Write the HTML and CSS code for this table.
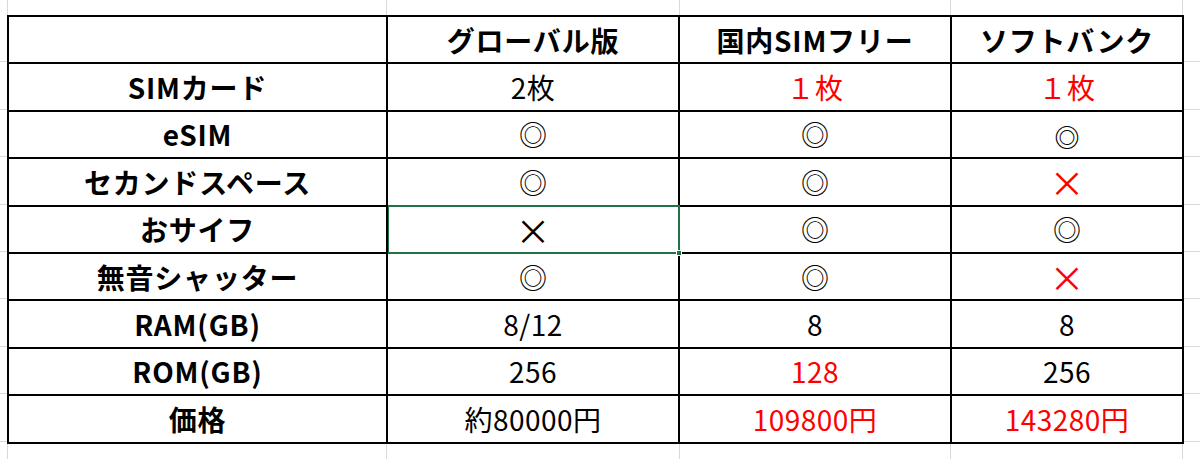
FILE: index.html
```html
<!DOCTYPE html>
<html lang="ja">
<head>
<meta charset="utf-8">
<title>比較表</title>
<link rel="stylesheet" href="styles.css">
</head>
<body>
<div class="sheet">
  <div class="table">
    <div class="cell head"></div>
    <div class="cell head">グローバル版</div>
    <div class="cell head">国内SIMフリー</div>
    <div class="cell head">ソフトバンク</div>

    <div class="cell head">SIMカード</div>
    <div class="cell">2枚</div>
    <div class="cell red">１枚</div>
    <div class="cell red">１枚</div>

    <div class="cell head">eSIM</div>
    <div class="cell mark">◎</div>
    <div class="cell mark">◎</div>
    <div class="cell mark alt">◎</div>

    <div class="cell head">セカンドスペース</div>
    <div class="cell mark">◎</div>
    <div class="cell mark">◎</div>
    <div class="cell mark cross red">×</div>

    <div class="cell head">おサイフ</div>
    <div class="cell mark cross selected">×<span class="sel-frame"><span class="sel-handle"></span></span></div>
    <div class="cell mark">◎</div>
    <div class="cell mark">◎</div>

    <div class="cell head">無音シャッター</div>
    <div class="cell mark">◎</div>
    <div class="cell mark">◎</div>
    <div class="cell mark cross red">×</div>

    <div class="cell head">RAM(GB)</div>
    <div class="cell">8/12</div>
    <div class="cell">8</div>
    <div class="cell">8</div>

    <div class="cell head">ROM(GB)</div>
    <div class="cell">256</div>
    <div class="cell red">128</div>
    <div class="cell">256</div>

    <div class="cell head">価格</div>
    <div class="cell">約80000円</div>
    <div class="cell red">109800円</div>
    <div class="cell red">143280円</div>
  </div>
</div>
</body>
</html>
```

FILE: styles.css
```css
* { box-sizing: border-box; }

html, body {
  margin: 0;
  padding: 0;
  background: #fff;
}

.sheet {
  width: 1200px;
  height: 459px;
  overflow: hidden;
  padding: 15px 0 0 7px;
  background-color: #fff;
  background-image:
    repeating-linear-gradient(to bottom, transparent 0 46.4px, #dadada 46.4px 47.4px),
    linear-gradient(to right,
      transparent 0 7px, #dadada 7px 8px,
      transparent 8px 386px, #dadada 386px 387px,
      transparent 387px 679px, #dadada 679px 680px,
      transparent 680px 950px, #dadada 950px 951px,
      transparent 951px 1182px, #dadada 1182px 1183px,
      transparent 1183px);
  background-position: 0 15px, 0 0;
  font-family: "Noto Sans CJK JP", "Noto Sans", sans-serif;
  color: #000;
}

.table {
  display: grid;
  width: max-content;
  grid-template-columns: 377px 290px 270px 230px;
  grid-auto-rows: 45.4px;
  gap: 2px;
  padding: 2px;
  background: #000;
}

.cell {
  position: relative;
  background: #fff;
  display: flex;
  align-items: center;
  justify-content: center;
  font-size: 28px;
  line-height: 1;
  font-weight: 400;
  white-space: nowrap;
  letter-spacing: 0.5px;
}

.head {
  font-weight: 700;
  font-size: 28px;
  letter-spacing: 0.8px;
}

.red { color: #ff0000; }

.mark { font-size: 28px; letter-spacing: 0; }

.mark.alt {
  font-weight: 700;
  font-size: 25px;
  padding-top: 5px;
}

.cross {
  font-size: 35px;
}

.selected { z-index: 1; }

.sel-frame {
  position: absolute;
  top: -2px;
  left: 0;
  right: -2px;
  bottom: -2px;
  border: 2px solid #217346;
  border-left-width: 1px;
  pointer-events: none;
}

.sel-handle {
  position: absolute;
  right: -4px;
  bottom: -4px;
  width: 6px;
  height: 6px;
  background: #217346;
  border: 1px solid #fff;
}
```
